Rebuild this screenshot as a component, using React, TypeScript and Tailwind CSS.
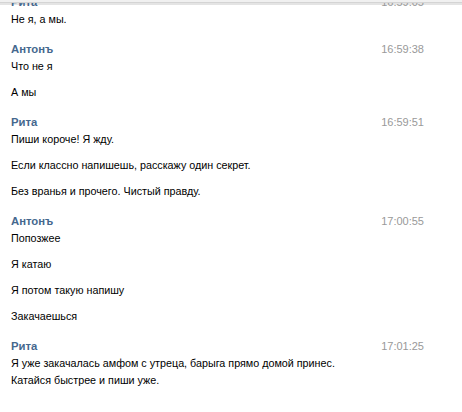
import React from "react";

type Group = { name: string; time: string; messages: string[][] };

const groups: Group[] = [
  { name: "Рита", time: "16:59:05", messages: [["Не я, а мы."]] },
  { name: "Антонъ", time: "16:59:38", messages: [["Что не я"], ["А мы"]] },
  {
    name: "Рита",
    time: "16:59:51",
    messages: [
      ["Пиши короче! Я жду."],
      ["Если классно напишешь, расскажу один секрет."],
      ["Без вранья и прочего. Чистый правду."],
    ],
  },
  {
    name: "Антонъ",
    time: "17:00:55",
    messages: [["Попозжее"], ["Я катаю"], ["Я потом такую напишу"], ["Закачаешься"]],
  },
  {
    name: "Рита",
    time: "17:01:25",
    messages: [
      [
        "Я уже закачалась амфом с утреца, барыга прямо домой принес.",
        "Катайся быстрее и пиши уже.",
      ],
    ],
  },
];

export default function App() {
  return (
    <div
      className="relative w-[462px] h-[412px] overflow-hidden bg-white text-[11px] text-black"
      style={{ fontFamily: '"Liberation Sans", Arial, sans-serif' }}
    >
      <div className="absolute left-0 top-[3px] w-full h-[2px] bg-[#e4e4e4]" />
      <div className="relative mt-[-6px] pl-[11px] pr-[38px] flex flex-col gap-[13px]">
        {groups.map((g, i) => (
          <div key={i} className="flex flex-col">
            <div className="flex justify-between items-center h-[17px] leading-[17px]">
              <span className="font-bold text-[#45688e] text-[11.3px]">{g.name}</span>
              <span className="text-[#999999]">{g.time}</span>
            </div>
            <div className="flex flex-col gap-[9px] text-[10.75px]">
              {g.messages.map((m, j) => (
                <div key={j} className="leading-[17px]">
                  {m.map((line, k) => (
                    <div key={k}>{line}</div>
                  ))}
                </div>
              ))}
            </div>
          </div>
        ))}
      </div>
      <div className="absolute left-0 top-0 w-full h-[3px] bg-[#f0f0f0] border-b border-b-[#d4d4d4]" />
    </div>
  );
}
